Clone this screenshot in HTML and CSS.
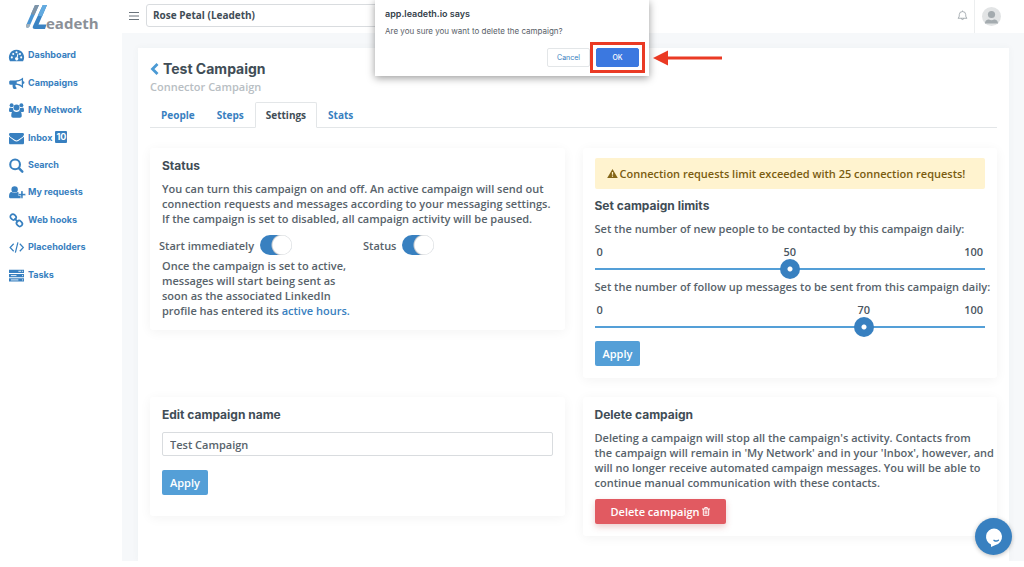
FILE: index.html
```html
<!DOCTYPE html>
<html lang="en">
<head>
  <meta charset="UTF-8">
  <meta name="viewport" content="width=device-width, initial-scale=1">
  <title>Leadeth - Test Campaign</title>
  <link rel="stylesheet" href="styles.css">
</head>
<body>
  <div class="app">
    <aside class="sidebar">
      <a class="logo" href="#" aria-label="Leadeth">
        <svg width="76" height="28" viewBox="0 0 76 28">
          <path d="M13 1H9L0 21.500c-.5 2 1.500 2.800 3.200 1.500z" fill="#4a95d3"/>
          <path d="M13 1H9L5 10l3.300 1z" fill="#7f93a5"/>
          <path d="M21 1h-4.200L7 22c-.8 2 0 3 2 3h10l1.500-4.500H12.500z" fill="#3a83c3"/>
          <path d="M21 1h-4.200l-5 10.500 4.200 1z" fill="#62aae0"/>
          <path d="M0 21.500c-.5 2 1.500 2.800 3.200 1.500l1.200-2.800L.8 20z" fill="#a5b0b8"/>
          <text x="20" y="25" class="logo-text">eadeth</text>
        </svg>
      </a>
      <nav>
        <ul class="menu">
          <li><a href="#">
            <svg class="icon" viewBox="0 0 16 16"><path d="M8 2a8 8 0 0 0-7 12h14A8 8 0 0 0 8 2z" fill="currentColor"/><g fill="#fff"><circle cx="3" cy="10" r="1.100"/><circle cx="4.500" cy="6.300" r="1.100"/><circle cx="8" cy="4.500" r="1.100"/><circle cx="11.700" cy="6.300" r="1.100"/><circle cx="13" cy="10" r="1.100"/><path d="M9.200 5.800l.9.300-.9 4a1.700 1.700 0 1 1-1.100-.3z"/></g></svg>
            Dashboard</a></li>
          <li><a href="#">
            <svg class="icon" viewBox="0 0 16 16"><path d="M15 1.500v4a1.200 1.200 0 0 1 0 3v4.500c-3-2.500-6-3.500-7.700-3.600-.8.700-.5 1.400-.1 2 .2.700.5 1 1.200 1.500-.7 1.400-3 1.300-3.900.5-.4-1.200-1-2.400-.6-4.100H1.700A1.600 1.600 0 0 1 .2 7.600V6.200c0-.8.700-1.500 1.500-1.500h5C9 4.700 12 4 15 1.500zm-1.400 2.800C11.500 5.500 9.800 5.900 8.200 6v2.100c1.600.1 3.300.8 5.400 2z" fill="currentColor" fill-rule="evenodd"/></svg>
            Campaigns</a></li>
          <li><a href="#">
            <svg class="icon" viewBox="0 0 16 16"><g fill="currentColor"><circle cx="2.800" cy="2.400" r="2.100"/><circle cx="13.200" cy="2.400" r="2.100"/><circle cx="8" cy="4.900" r="3.200"/><path d="M0 8.500C0 6 .5 4.800 1.300 4.800c1 .7 2 .8 3 .4 0 1.200.3 2.200.8 3.100-.8.300-1.600.7-2 1.200H1.300C.5 9.500 0 9.100 0 8.500zM16 8.500c0-2.500-.5-3.700-1.300-3.700-1 .7-2 .8-3 .4 0 1.200-.3 2.200-.8 3.100.8.300 1.600.7 2 1.200h1.800c.8 0 1.300-.4 1.300-1zM2.400 13.600c0-3.200.8-5 2.700-5 1.800 1.400 4 1.400 5.800 0 1.900 0 2.700 1.800 2.700 5 0 1.400-.8 2.100-2 2.100H4.400c-1.200 0-2-.7-2-2.100z"/></g></svg>
            My Network</a></li>
          <li><a href="#">
            <svg class="icon" viewBox="0 0 16 16"><path d="M0 3.500C0 2.700.6 2 1.400 2h13.200c.8 0 1.400.7 1.400 1.500S15.400 5.400 14.700 6L9.500 9.600c-1 .7-2 .7-3 0L1.300 6C.6 5.400 0 4.500 0 3.500zM0 6.200l5.700 4.200c1.500 1.100 3.100 1.100 4.600 0L16 6.200v6.600c0 .8-.6 1.400-1.400 1.400H1.400c-.8 0-1.400-.6-1.400-1.400z" fill="currentColor"/></svg>
            Inbox <span class="count">10</span></a></li>
          <li><a href="#">
            <svg class="icon" viewBox="0 0 16 16"><g fill="none" stroke="currentColor" stroke-width="2.200"><circle cx="6.500" cy="6.800" r="5.200"/><path d="M10.500 10.800l3.700 3.700" stroke-width="2.600" stroke-linecap="round"/></g></svg>
            Search</a></li>
          <li><a href="#">
            <svg class="icon" viewBox="0 0 16 16"><g fill="currentColor"><circle cx="6" cy="4.700" r="3.400"/><path d="M0 12.500c0-3.200.8-5 3-5 1.700 1.400 4.300 1.400 6 0 .6 0 1 .2 1.300.5v3.500h2.200v2.600H2.300C.9 14.100 0 13.700 0 12.500z"/><path d="M12.800 6.400h2v2.800h2.800v2h-2.800V14h-2v-2.800H10v-2h2.800z" stroke="#fff" stroke-width=".3"/></g></svg>
            My requests</a></li>
          <li><a href="#">
            <svg class="icon" viewBox="0 0 16 16"><g fill="none" stroke="currentColor" stroke-width="1.800"><rect x="1.300" y="1.600" width="6.400" height="5.400" rx="2.600" transform="rotate(45 4.500 4.300)"/><rect x="7.900" y="8.500" width="6.400" height="5.400" rx="2.600" transform="rotate(45 11.100 11.200)"/><path d="M5.800 5.700l4 4"/></g></svg>
            Web hooks</a></li>
          <li><a href="#">
            <svg class="icon" viewBox="0 0 16 16"><path d="M5 4L1.200 8 5 12M11.500 4l3.800 4-3.800 4M9.500 2.500l-2.700 11" fill="none" stroke="currentColor" stroke-width="1.300"/></svg>
            Placeholders</a></li>
          <li><a href="#">
            <svg class="icon" viewBox="0 0 16 16"><path d="M0 1.800h16v3.400H0zM0 6.400h16v3.400H0zM0 11h16v3.400H0z" fill="currentColor"/><path d="M10 3.500h3M2 8.100h6M2 12.700h8" stroke="#fff" stroke-width=".9"/><path d="M14 3.500h1M14 8.100h1M14 12.700h1" stroke="#fff"/></svg>
            Tasks</a></li>
        </ul>
      </nav>
    </aside>

    <div class="main">
      <header class="topbar">
        <button class="icon-btn" aria-label="Toggle menu">
          <svg width="10" height="10" viewBox="0 0 10 10"><path d="M0 1.500h10M0 5h10M0 8.500h10" stroke="#6a737b" stroke-width="1"/></svg>
        </button>
        <select class="account" aria-label="Account">
          <option>Rose Petal (Leadeth)</option>
        </select>
        <button class="icon-btn bell" aria-label="Notifications">
          <svg width="11" height="11" viewBox="0 0 12 12"><path d="M1 9c1.200-.7 1.500-1.700 1.500-4A3.500 3.300 0 0 1 6 1.700 3.500 3.300 0 0 1 9.500 5c0 2.300.3 3.300 1.500 4zM4.800 9.200a1.200 1.200 0 0 0 2.400 0M6 .6v1" fill="none" stroke="#8d959c" stroke-width=".8"/></svg>
        </button>
        <button class="icon-btn user" aria-label="Profile">
          <svg width="19" height="19" viewBox="0 0 19 19"><circle cx="9.500" cy="9.500" r="9.500" fill="#e2e4e5"/><circle cx="9.500" cy="7.500" r="3.600" fill="#a4abaf"/><path d="M3 16.500c0-3 1.800-3.800 4-4 1.500 1 3.500 1 5 0 2.200.2 4 1 4 4z" fill="#a4abaf"/></svg>
        </button>
      </header>

      <main class="content">
        <div class="panel">
          <h1 class="title">
            <a href="#" aria-label="Back"><svg width="9" height="12" viewBox="0 0 9 12"><path d="M7.500 1L2.500 6l5 5" fill="none" stroke="#4b9ad4" stroke-width="2.800"/></svg></a>
            Test Campaign
          </h1>
          <p class="subtitle">Connector Campaign</p>

          <nav class="tabs">
            <a href="#">People</a>
            <a href="#">Steps</a>
            <a href="#" class="active">Settings</a>
            <a href="#">Stats</a>
          </nav>

          <div class="cards">
            <section class="card">
              <h2>Status</h2>
              <p>You can turn this campaign on and off. An active campaign will send out<br>
                connection requests and messages according to your messaging settings.<br>
                If the campaign is set to disabled, all campaign activity will be paused.</p>
              <div class="switches">
                <label>Start immediately <input type="checkbox" class="switch" checked></label>
                <label>Status <input type="checkbox" class="switch" checked></label>
              </div>
              <p>Once the campaign is set to active,<br>
                messages will start being sent as<br>
                soon as the associated LinkedIn<br>
                profile has entered its <a href="#">active hours.</a></p>
            </section>

            <section class="card">
              <div class="alert">
                <svg width="11" height="9" viewBox="0 0 11 9"><path d="M5.500 0L10.800 9H.2z" fill="#856617"/><path d="M5.500 3v2.800M5.500 6.500v1.300" stroke="#fff3cf" stroke-width="1.200"/></svg>
                Connection requests limit exceeded with 25 connection requests!
              </div>
              <h2>Set campaign limits</h2>
              <label for="newPeople">Set the number of new people to be contacted by this campaign daily:</label>
              <div class="scale">
                <span>0</span>
                <output for="newPeople" style="--value: 0.5">50</output>
                <span class="max">100</span>
              </div>
              <input type="range" id="newPeople" class="slider" min="0" max="100" value="50">
              <label for="followUps">Set the number of follow up messages to be sent from this campaign daily:</label>
              <div class="scale">
                <span>0</span>
                <output for="followUps" style="--value: 0.7">70</output>
                <span class="max">100</span>
              </div>
              <input type="range" id="followUps" class="slider" min="0" max="100" value="70">
              <button class="btn btn-limits">Apply</button>
            </section>

            <section class="card card-name">
              <h2><label for="campaignName">Edit campaign name</label></h2>
              <input type="text" id="campaignName" class="text-input" value="Test Campaign">
              <button class="btn">Apply</button>
            </section>

            <section class="card">
              <h2>Delete campaign</h2>
              <p>Deleting a campaign will stop all the campaign's activity. Contacts from<br>
                the campaign will remain in 'My Network' and in your 'Inbox', however, and<br>
                will no longer receive automated campaign messages. You will be able to<br>
                continue manual communication with these contacts.</p>
              <button class="btn btn-danger">Delete campaign
                <svg width="8" height="9" viewBox="0 0 8 9"><path d="M0 2h8M2.700 1.800V.6h2.600v1.200M1.300 2v6.300h5.400V2M3.200 3.500v3.400M4.800 3.500v3.400" fill="none" stroke="#fff" stroke-width="1"/></svg>
              </button>
            </section>
          </div>
        </div>
      </main>
    </div>
  </div>

  <dialog open class="confirm">
    <h2>app.leadeth.io says</h2>
    <p>Are you sure you want to delete the campaign?</p>
    <div class="confirm-actions">
      <button class="cancel">Cancel</button>
      <span class="highlight"><button class="ok">OK</button></span>
    </div>
    <svg class="arrow" width="69" height="16" viewBox="0 0 69 16"><path d="M0 8L15 .5v15z" fill="#ea3a24"/><path d="M14 8h55" stroke="#ea3a24" stroke-width="3"/></svg>
  </dialog>

  <button class="chat" aria-label="Open chat">
    <svg width="20" height="20" viewBox="0 0 20 20"><path d="M10 1.500a8.300 8.300 0 0 1 1.500 16.400L7 20v-2.600A8.300 8.300 0 0 1 10 1.500z" fill="#fff"/><path d="M10 13.300c1.600 1 3.200.9 4.400-.1" fill="none" stroke="#3880c0" stroke-width="1.400" stroke-linecap="round"/></svg>
  </button>
</body>
</html>
```
FILE: styles.css
```css
* {
  box-sizing: border-box;
}
body {
  margin: 0;
  font-family: "Open Sans", sans-serif;
  font-size: 11px;
  font-weight: 600;
  line-height: 15px;
  color: #58636b;
  background: #fff;
}
h1, h2, p, ul {
  margin: 0;
  padding: 0;
}
a {
  color: #3880c0;
  text-decoration: none;
}
button, input, select {
  font: inherit;
}
.app {
  display: flex;
  min-height: calc(100vh - 6px);
}

/* sidebar */
.sidebar {
  width: 122px;
  flex-shrink: 0;
  background: #fff;
  box-shadow: 0 0 3px rgba(0, 0, 0, 0.12);
}
.logo {
  display: block;
  height: 41px;
  padding: 4px 0 0 26px;
}
.logo svg {
  display: block;
}
.logo-text {
  font-size: 15px;
  font-weight: 700;
  fill: #8b9097;
}
.menu {
  display: grid;
  grid-auto-rows: 1fr;
  height: 247px;
  list-style: none;
  font-family: Inter, sans-serif;
  font-size: 9px;
  font-weight: 700;
}
.menu a {
  display: flex;
  align-items: center;
  gap: 4px;
  height: 100%;
  padding-left: 9px;
}
.icon {
  width: 15px;
  height: 15px;
  margin-top: 2px;
  overflow: visible;
}
.count {
  margin-left: -1px;
  padding: 0 1px;
  line-height: 12px;
  color: #fff;
  background: #3880c0;
  border-radius: 1px;
}

/* top bar */
.main {
  display: flex;
  flex-direction: column;
  flex: 1;
  min-width: 0;
}
.topbar {
  display: flex;
  align-items: center;
  height: 33px;
  padding-left: 7px;
  background: #fff;
}
.icon-btn {
  display: flex;
  padding: 0;
  border: none;
  background: none;
  cursor: pointer;
}
.account {
  width: 300px;
  height: 23px;
  margin: 0 auto 3px 7px;
  padding: 0 6px;
  appearance: none;
  font-size: 10px;
  font-weight: 700;
  color: #414d56;
  background: #fff;
  border: 1px solid #d9dcdf;
  border-radius: 3px;
}
.topbar > .icon-btn:first-child {
  width: 10px;
  margin-bottom: 2px;
}
.bell {
  margin: 0 6px 2px 0;
}
.user {
  align-items: center;
  height: 100%;
  padding: 0 23px 0 7px;
  border-left: 1px solid #eceeef;
}
.content {
  flex: 1;
  padding: 15px 15px 0 16px;
  background: #f6f8fa;
}
.panel {
  height: 100%;
  padding: 13px 12px 23px;
  background: #fff;
  box-shadow: 0 0 8px rgba(60, 70, 80, 0.04);
}
.title {
  display: flex;
  align-items: center;
  gap: 4px;
  font-family: Inter, sans-serif;
  font-size: 14px;
  font-weight: 700;
  line-height: 16px;
  color: #414d56;
}
.title a {
  display: flex;
}
.subtitle {
  margin-top: 2px;
  color: #b8bec3;
}

/* tabs */
.tabs {
  display: flex;
  margin: 8px 0 20px;
  font-size: 10px;
  font-weight: 700;
  border-bottom: 1px solid #e3e6e8;
}
.tabs a {
  padding: 5px 10px 4px;
  margin-bottom: -1px;
  border: 1px solid transparent;
}
.tabs .active {
  color: #414d56;
  background: #fff;
  border-color: #e3e6e8 #e3e6e8 #fff;
  border-radius: 2px 2px 0 0;
}

/* cards */
.cards {
  display: grid;
  grid-template-columns: 1fr 1fr;
  align-items: start;
  gap: 19px 18px;
}
.card {
  min-width: 0;
  padding: 10px 12px 12px;
  background: #fff;
  border-radius: 3px;
  box-shadow: 0 2px 12px rgba(0, 0, 0, 0.05);
}
.card h2 {
  margin-bottom: 8px;
  font-family: Inter, sans-serif;
  font-size: 12px;
  font-weight: 700;
  line-height: 15px;
  color: #414d56;
}
.card p,
.card > label {
  display: block;
  white-space: nowrap;
}
.switches {
  display: grid;
  grid-template-columns: 204px 1fr;
  margin: 9px -3px 3px;
}
.switches label {
  display: flex;
  align-items: center;
  gap: 6px;
}
.switch {
  width: 32px;
  height: 20px;
  margin: 0;
  appearance: none;
  background: radial-gradient(circle at 22px 10px, #fff 9px, #c8ccd0 10px, #3880c0 11px);
  border-radius: 10px;
}
.alert {
  display: flex;
  align-items: center;
  gap: 2px;
  margin-bottom: 9px;
  padding: 8px 12px;
  color: #7a5c10;
  background: #fff3cf;
  border-radius: 2px;
}
.scale {
  display: grid;
  margin-top: 8px;
  color: #4b565f;
}
.scale > * {
  grid-area: 1 / 1;
  padding: 0 2px;
}
.scale output {
  width: 20px;
  margin-left: calc((100% - 20px) * var(--value));
  text-align: center;
}
.scale .max {
  text-align: right;
}
.slider {
  display: block;
  width: 100%;
  height: 20px;
  margin: 0;
  appearance: none;
  background: linear-gradient(#549fd7, #549fd7) center / 100% 2px no-repeat;
}
.slider::-webkit-slider-thumb {
  width: 20px;
  height: 20px;
  appearance: none;
  background: radial-gradient(circle, #fff 2px, #3880c0 3px);
  border-radius: 50%;
}
.text-input {
  display: block;
  width: 100%;
  height: 24px;
  margin: 10px 0 14px;
  padding: 0 7px;
  color: #58636b;
  border: 1px solid #d9dcdf;
  border-radius: 2px;
}
.card-name {
  padding-bottom: 21px;
}
.btn {
  display: block;
  padding: 5px 8px;
  color: #fff;
  background: #549fd7;
  border: none;
  border-radius: 2px;
  cursor: pointer;
}
.btn-limits {
  margin-top: 4px;
}
.btn-danger {
  margin-top: 9px;
  padding: 5px 16px;
  background: #e15a61;
  box-shadow: 0 3px 6px rgba(180, 60, 60, 0.25);
}

/* browser confirm box */
.confirm {
  position: absolute;
  top: 0;
  left: 50%;
  width: 274px;
  height: 76px;
  margin: 0 0 0 -137px;
  padding: 7px 10px;
  background: #fff;
  border: none;
  box-shadow: 0 2px 8px rgba(0, 0, 0, 0.4);
  font-family: Inter, sans-serif;
  font-weight: 400;
  color: #596168;
}
.confirm h2 {
  font-size: 9px;
  font-weight: 600;
  line-height: 13px;
  color: #35424b;
}
.confirm p {
  margin-top: 5px;
  font-size: 8px;
  line-height: 13px;
}
.confirm-actions {
  display: flex;
  justify-content: flex-end;
  align-items: center;
  margin: 4px -6px 0 0;
}
.confirm button {
  width: 43px;
  height: 19px;
  padding: 0;
  font-size: 7px;
  background: #fff;
  border: 1px solid #e3e6e8;
  border-radius: 2px;
}
.confirm .cancel {
  color: #3880c0;
}
.confirm .ok {
  display: block;
  font-weight: 500;
  color: #fff;
  background: #3b78e0;
  border-color: #3b78e0;
}
.highlight {
  padding: 3px;
  border: 3px solid #ea3a24;
}
.arrow {
  position: absolute;
  top: 50px;
  left: 278px;
}

.chat {
  position: fixed;
  right: 12px;
  bottom: 12px;
  display: flex;
  align-items: center;
  justify-content: center;
  width: 37px;
  height: 37px;
  padding: 0;
  background: #3880c0;
  border: none;
  border-radius: 50%;
  box-shadow: 0 1px 4px rgba(0, 0, 0, 0.25);
}
```
